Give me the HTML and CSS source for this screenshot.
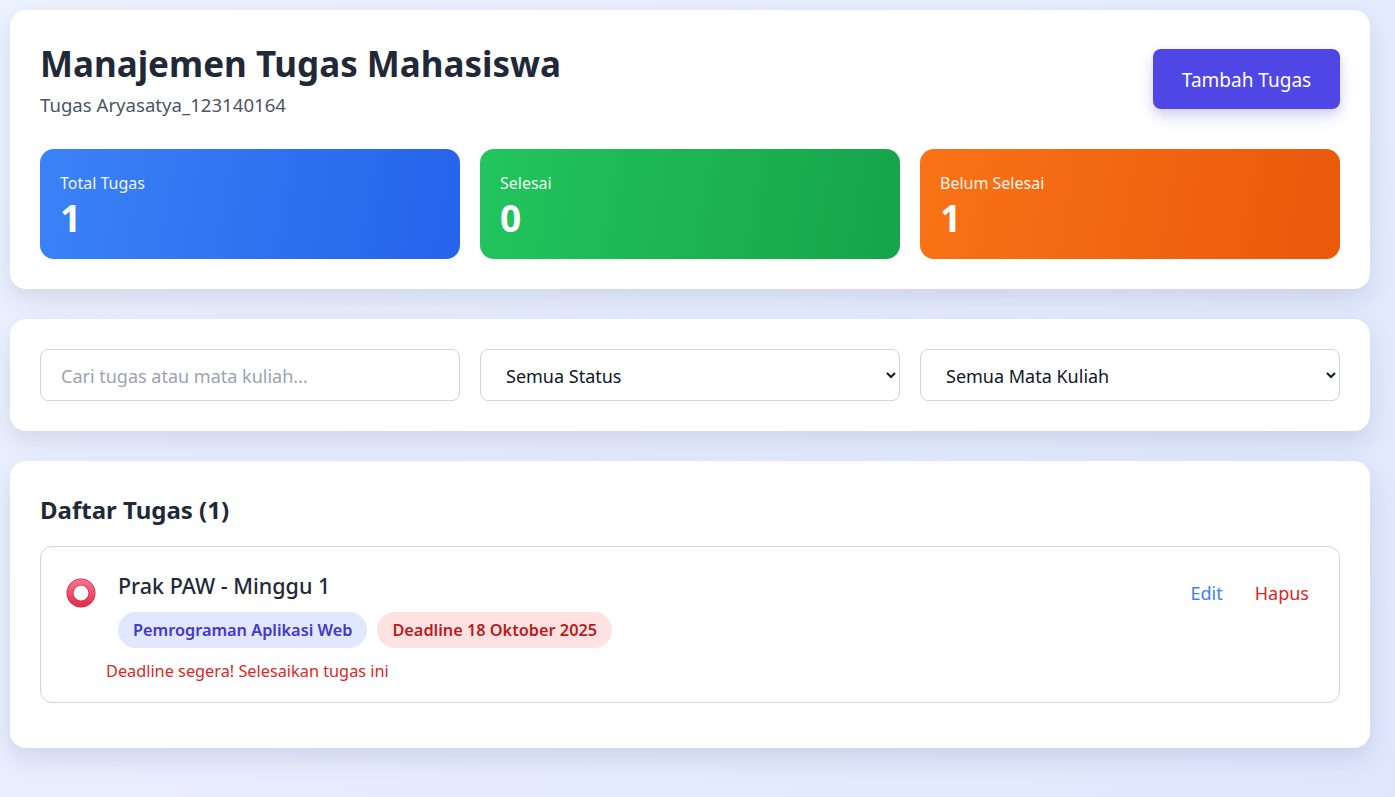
FILE: index.html
```html
<!DOCTYPE html>
<html lang="id">
<head>
<meta charset="utf-8">
<title>Manajemen Tugas Mahasiswa</title>
<link rel="stylesheet" href="styles.css">
</head>
<body>
<div class="container">
  <section class="card header-card">
    <div class="header-top">
      <div>
        <h1 class="title">Manajemen Tugas Mahasiswa</h1>
        <p class="subtitle">Tugas Aryasatya_123140164</p>
      </div>
      <button class="btn-add">Tambah Tugas</button>
    </div>
    <div class="stats">
      <div class="stat stat-blue">
        <div class="stat-label">Total Tugas</div>
        <div class="stat-value">1</div>
      </div>
      <div class="stat stat-green">
        <div class="stat-label">Selesai</div>
        <div class="stat-value">0</div>
      </div>
      <div class="stat stat-orange">
        <div class="stat-label">Belum Selesai</div>
        <div class="stat-value">1</div>
      </div>
    </div>
  </section>

  <section class="card filter-card">
    <input class="field" type="text" placeholder="Cari tugas atau mata kuliah...">
    <select class="field select">
      <option>Semua Status</option>
    </select>
    <select class="field select">
      <option>Semua Mata Kuliah</option>
    </select>
  </section>

  <section class="card list-card">
    <h2 class="list-title">Daftar Tugas (1)</h2>
    <div class="task">
      <div class="task-main">
        <div class="task-row">
          <svg class="task-icon" width="30" height="30" viewBox="0 0 30 30">
            <defs>
              <linearGradient id="ring" x1="0" y1="0" x2="0" y2="1">
                <stop offset="0" stop-color="#fb6d8c"/>
                <stop offset="1" stop-color="#e5304f"/>
              </linearGradient>
            </defs>
            <circle cx="15" cy="15" r="11" fill="none" stroke="#d42a48" stroke-width="7"/>
            <circle cx="15" cy="15" r="11" fill="none" stroke="url(#ring)" stroke-width="5.4"/>
          </svg>
          <div class="task-body">
            <div class="task-title">Prak PAW - Minggu 1</div>
            <div class="badges">
              <span class="badge badge-course">Pemrograman Aplikasi Web</span>
              <span class="badge badge-deadline">Deadline 18 Oktober 2025</span>
            </div>
          </div>
        </div>
        <div class="task-warning">Deadline segera! Selesaikan tugas ini</div>
      </div>
      <div class="task-actions">
        <button class="link link-edit">Edit</button>
        <button class="link link-delete">Hapus</button>
      </div>
    </div>
  </section>
</div>
</body>
</html>
```

FILE: styles.css
```css
* { box-sizing: border-box; }

html, body {
  margin: 0;
  padding: 0;
}

body {
  font-family: "Noto Sans", "Open Sans", sans-serif;
  background: linear-gradient(135deg, #ecf2fe 0%, #e0e7fd 100%);
  min-height: 797px;
  color: #1f2937;
}

.container {
  padding: 10px 25px 40px 10px;
  display: flex;
  flex-direction: column;
  gap: 30px;
}

.card {
  background: #fff;
  border-radius: 16px;
  box-shadow: 0 10px 25px rgba(30, 41, 80, 0.12);
  padding: 30px;
}

.header-top {
  display: flex;
  justify-content: space-between;
  align-items: flex-start;
}

.title {
  margin: 0;
  font-size: 35px;
  font-weight: 700;
  line-height: 48px;
  color: #1f2937;
}

.subtitle {
  margin: 4px 0 0;
  font-size: 18.6px;
  line-height: 26px;
  color: #4b5563;
}

.btn-add {
  margin-top: 9px;
  width: 187px;
  height: 60px;
  border: none;
  border-radius: 8px;
  background: #4f46e5;
  color: #fff;
  font-family: inherit;
  font-size: 19px;
  padding-top: 2px;
  box-shadow: 0 8px 16px rgba(79, 70, 229, 0.18), 0 4px 10px rgba(0,0,0,0.08);
}

.stats {
  margin-top: 31px;
  display: grid;
  grid-template-columns: repeat(3, 1fr);
  gap: 20px;
}

.stat {
  height: 110px;
  border-radius: 14px;
  padding: 23px 20px;
  color: #fff;
}

.stat-blue { background: linear-gradient(100deg, #3b82f6, #2563eb); }
.stat-green { background: linear-gradient(100deg, #22c55e, #16a34a); }
.stat-orange { background: linear-gradient(100deg, #f97316, #ea580c); }

.stat-label {
  font-size: 16px;
  line-height: 22px;
  opacity: 0.92;
}

.stat-value {
  margin-top: 2px;
  font-size: 37px;
  font-weight: 700;
  line-height: 44px;
}

.filter-card {
  display: grid;
  grid-template-columns: repeat(3, 1fr);
  gap: 20px;
}

.field {
  height: 52px;
  border: 1px solid #d1d5db;
  border-radius: 8px;
  background: #fff;
  font-family: inherit;
  font-size: 18px;
  color: #111827;
  padding: 2px 20px 0;
}

.field::placeholder { color: #9ca3af; }

.select {
  padding: 2px 14px 0 21px;
}

.list-card {
  padding: 30px 30px 45px;
}

.list-title {
  margin: 3px 0 20px;
  font-size: 24px;
  line-height: 32px;
  font-weight: 700;
  color: #1f2937;
}

.task {
  border: 1px solid #d1d5db;
  border-radius: 12px;
  padding: 24px 18px 19px 25px;
  display: flex;
  justify-content: space-between;
  align-items: flex-start;
}

.task-row {
  display: flex;
  gap: 22px;
  align-items: flex-start;
}

.task-icon {
  margin-top: 7px;
  flex: none;
}

.task-title {
  font-size: 21.5px;
  line-height: 30px;
  font-weight: 500;
  color: #1f2937;
}

.badges {
  margin-top: 11px;
  display: flex;
  gap: 10px;
}

.badge {
  height: 36px;
  line-height: 36px;
  padding: 0 15px;
  border-radius: 18px;
  font-size: 16.3px;
  font-weight: 600;
}

.badge-course { background: #e0e7ff; color: #4338ca; }
.badge-deadline { background: #fee2e2; color: #b91c1c; }

.task-warning {
  margin: 11px 0 0 40px;
  font-size: 16.3px;
  line-height: 24px;
  color: #dc2626;
}

.task-actions {
  display: flex;
  gap: 8px;
  margin-top: 10px;
}

.link {
  border: none;
  background: none;
  font-family: inherit;
  font-size: 18px;
  line-height: 24px;
  padding: 0 12px;
}

.link-edit { color: #3b82f6; }
.link-delete { color: #dc2626; }
```
